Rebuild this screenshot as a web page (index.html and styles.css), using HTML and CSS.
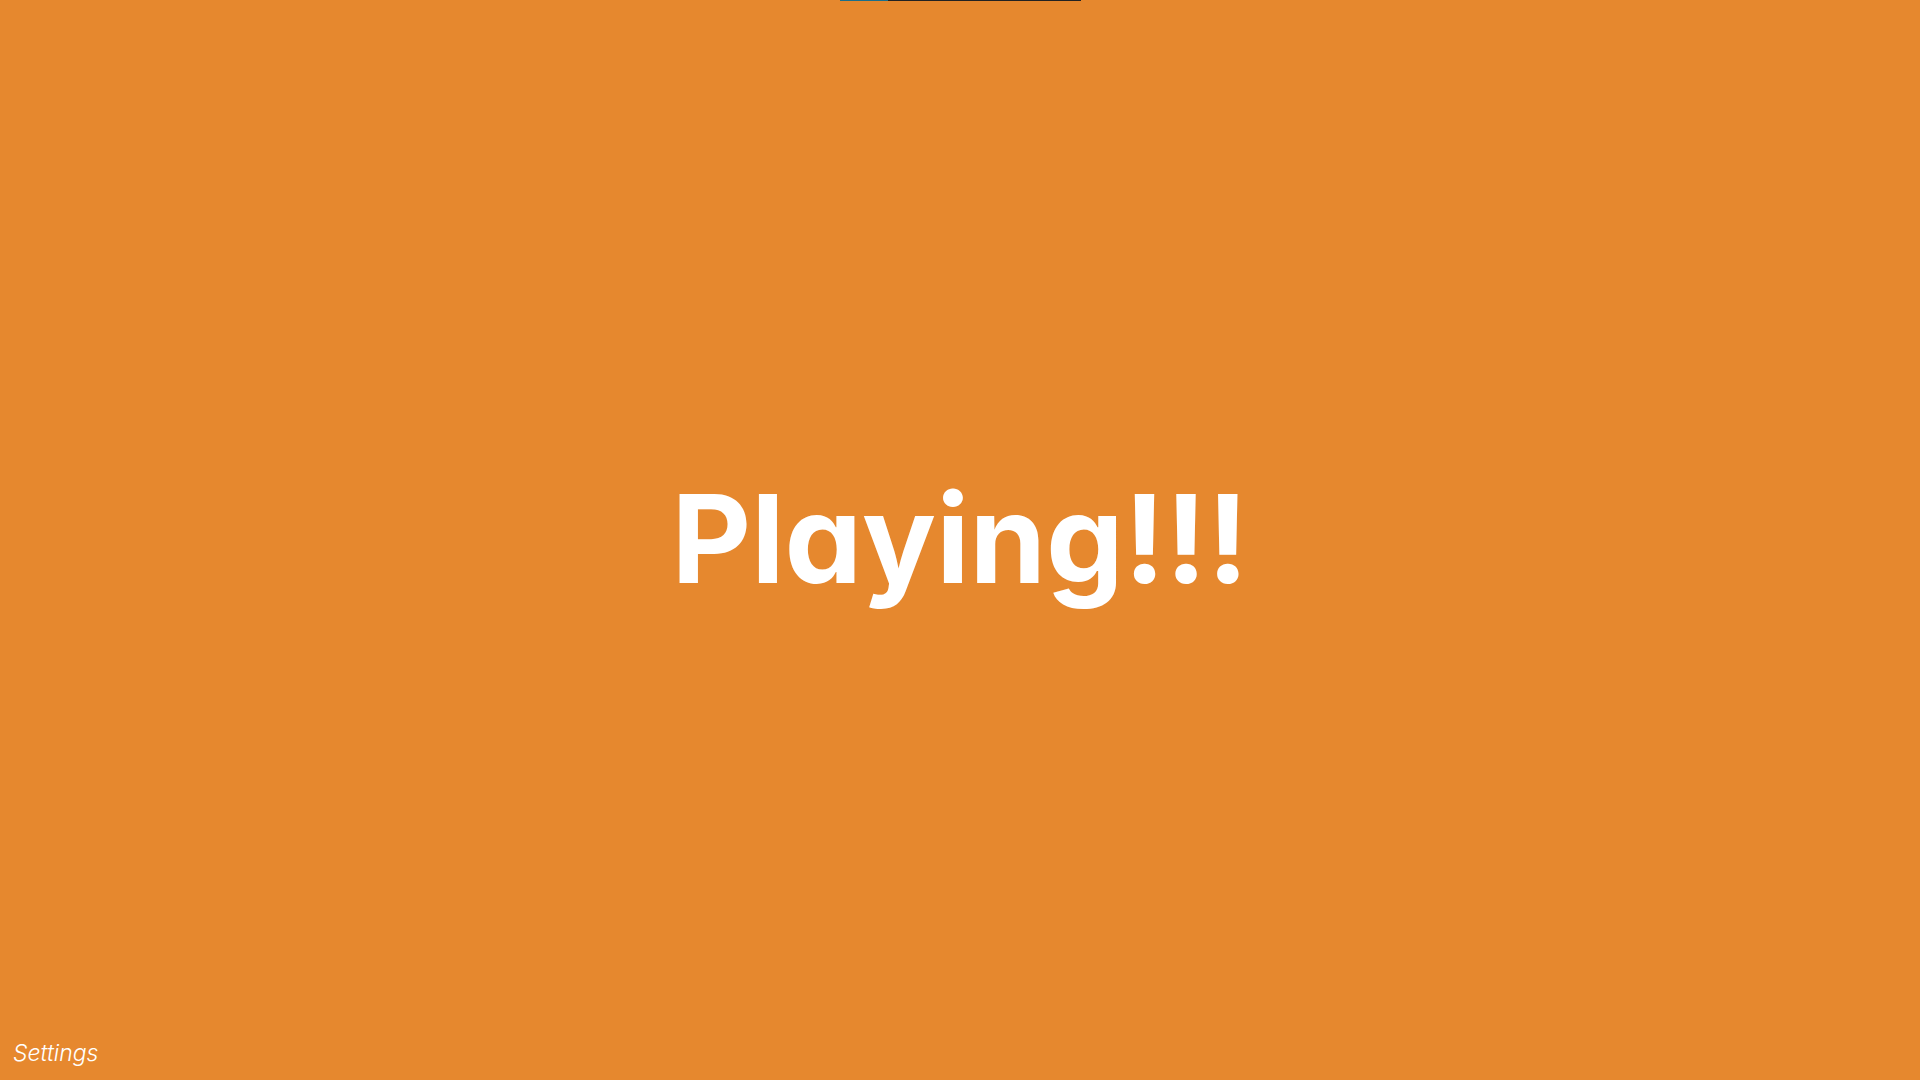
FILE: index.html
```html
<!DOCTYPE html>
<html>
<head>
<meta charset="utf-8">
<link rel="stylesheet" href="styles.css">
</head>
<body>
<div class="progress"><div class="progress-fill"></div></div>
<main class="stage">
  <h1 class="title">Playing!!!</h1>
</main>
<a class="settings">Settings</a>
</body>
</html>
```
FILE: styles.css
```css
html, body {
  margin: 0;
  padding: 0;
  width: 100%;
  height: 100%;
  background: #e6882e;
  overflow: hidden;
}
body {
  display: flex;
  flex-direction: column;
  font-family: Inter, "Noto Sans", sans-serif;
}
.progress {
  display: flex;
  align-self: center;
  width: 241px;
  height: 1px;
  background: #222222;
}
.progress-fill {
  width: 48px;
  background: #1a6e8a;
}
.stage {
  flex: 1;
  display: flex;
  align-items: center;
  justify-content: center;
}
.title {
  margin: 0;
  color: #ffffff;
  font-size: 123px;
  font-weight: 700;
  font-feature-settings: "cv11" 1;
  letter-spacing: 0;
  line-height: 1;
  padding-top: 37px;
}
.settings {
  color: #ffffff;
  font-style: italic;
  font-weight: 300;
  font-size: 23px;
  padding: 0 0 13px 13px;
}
```
